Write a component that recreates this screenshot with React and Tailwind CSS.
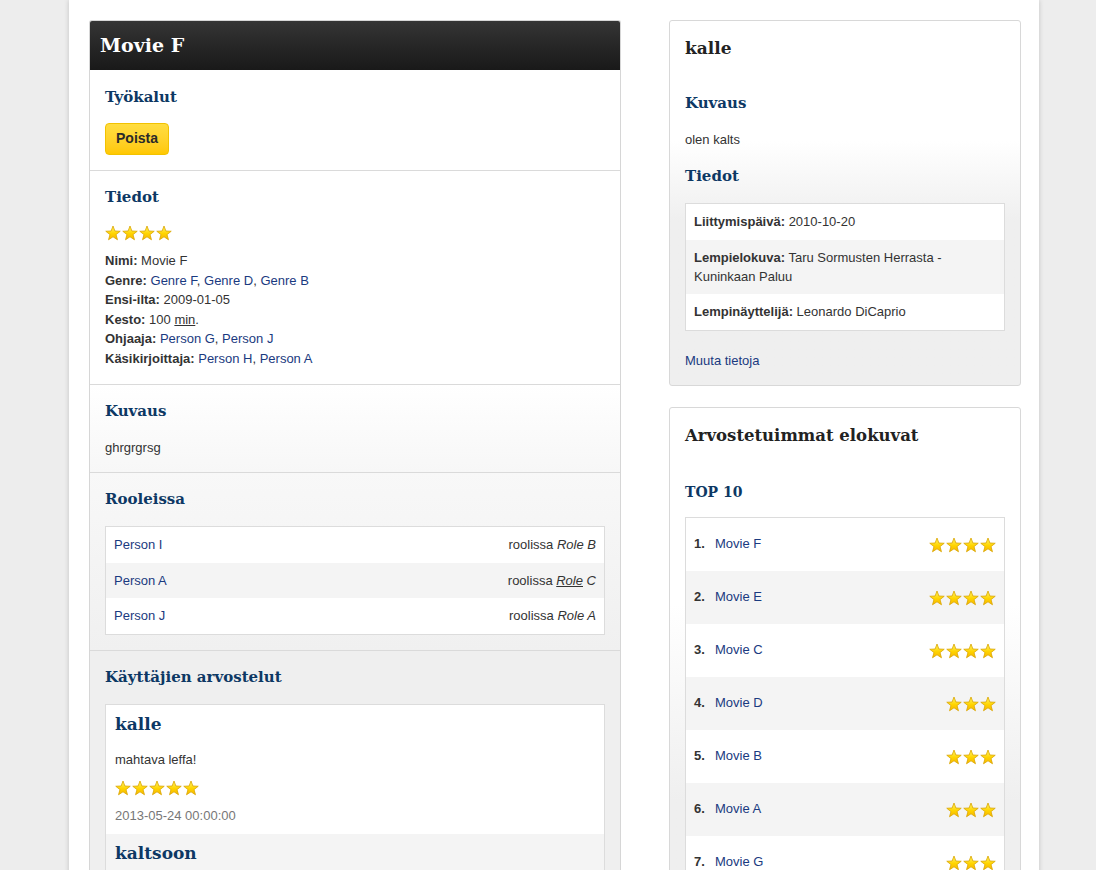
import { useId } from 'react';

const serif = "font-['DejaVu_Serif',Georgia,serif] font-bold";

const roles = [
  { person: 'Person I', role: 'Role B' },
  { person: 'Person A', role: 'Role C', abbr: true },
  { person: 'Person J', role: 'Role A' },
];

const top10 = [
  { title: 'Movie F', stars: 4 },
  { title: 'Movie E', stars: 4 },
  { title: 'Movie C', stars: 4 },
  { title: 'Movie D', stars: 3 },
  { title: 'Movie B', stars: 3 },
  { title: 'Movie A', stars: 3 },
  { title: 'Movie G', stars: 3 },
  { title: 'Movie H', stars: 3 },
  { title: 'Movie I', stars: 2 },
  { title: 'Movie J', stars: 2 },
];

export default function App() {
  return (
    <div className="min-h-[870px] bg-[#ededed] font-['Liberation_Sans',Arial,sans-serif] text-[13px] leading-[19.6px] text-[#333]">
      <div className="ml-[69px] flex w-[970px] gap-[48px] bg-white px-[20px] pt-[20px] pb-[40px] shadow-[0_0_5px_rgba(0,0,0,0.18)]">
        <MoviePanel />
        <div className="flex w-[352px] shrink-0 flex-col gap-[21px]">
          <ProfileCard />
          <TopCard />
        </div>
      </div>
    </div>
  );
}

function MoviePanel() {
  return (
    <div className="w-[532px] shrink-0 overflow-hidden rounded-t-[3px] border-x border-t border-[#d6d6d6]">
      <div className="flex h-[49px] items-center bg-gradient-to-b from-[#353535] to-[#191919] px-[10px]">
        <h1 className={`${serif} text-[19px] text-white`}>Movie F</h1>
      </div>

      <Section className="pt-[16px]">
        <SectionTitle>Työkalut</SectionTitle>
        <button className="mt-[15px] h-[32px] rounded-[4px] border border-[#f2c200] bg-gradient-to-b from-[#ffdd40] to-[#ffc800] px-[10px] text-[14px] font-bold text-[#2a2a2a]">
          Poista
        </button>
      </Section>

      <Section className="pb-[14px]">
        <SectionTitle>Tiedot</SectionTitle>
        <div className="mt-[17px] mb-[10px] flex"><Stars n={4} /></div>
        <p><b>Nimi:</b> Movie F</p>
        <p><b>Genre:</b> <A>Genre F</A>, <A>Genre D</A>, <A>Genre B</A></p>
        <p><b>Ensi-ilta:</b> 2009-01-05</p>
        <p><b>Kesto:</b> 100 <abbr className="underline">min</abbr>.</p>
        <p><b>Ohjaaja:</b> <A>Person G</A>, <A>Person J</A></p>
        <p><b>Käsikirjoittaja:</b> <A>Person H</A>, <A>Person A</A></p>
      </Section>

      <Section className="bg-gradient-to-b from-white to-[#f7f7f7]">
        <SectionTitle>Kuvaus</SectionTitle>
        <p className="mt-[16px]">ghrgrgrsg</p>
      </Section>

      <Section className="bg-gradient-to-b from-[#f8f8f8] to-[#f0f0f0]">
        <SectionTitle>Rooleissa</SectionTitle>
        <div className="mt-[16px] border border-[#dcdcdc]">
          {roles.map((r, i) => (
            <div key={r.person} className={`flex h-[35.5px] items-center justify-between px-[8px] ${i % 2 ? 'bg-[#f4f4f4]' : 'bg-white'}`}>
              <A>{r.person}</A>
              <span>
                roolissa{' '}
                <i>
                  {r.abbr ? <abbr className="underline">Role</abbr> : 'Role'} {r.role.split(' ')[1]}
                </i>
              </span>
            </div>
          ))}
        </div>
      </Section>

      <Section className="border-b-0 bg-[#efefef]">
        <SectionTitle>Käyttäjien arvostelut</SectionTitle>
        <div className="mt-[16px] border border-[#dcdcdc]">
          <Review name="kalle" text="mahtava leffa!" stars={5} date="2013-05-24 00:00:00" />
          <Review name="kaltsoon" text="ihan ok" stars={3} date="2013-05-23 00:00:00" alt />
        </div>
      </Section>
    </div>
  );
}

function Section({ children, className = '' }) {
  return <div className={`border-b border-[#dadada] px-[15px] pt-[15px] pb-[15px] ${className}`}>{children}</div>;
}

function SectionTitle({ children }) {
  return <h2 className={`${serif} text-[15px] leading-[22px] text-[#0d3864]`}>{children}</h2>;
}

function A({ children }) {
  return <a className="text-[#1a3a80]">{children}</a>;
}

function Review({ name, text, stars, date, alt }) {
  return (
    <div className={`px-[9px] pt-[8px] pb-[8px] ${alt ? 'bg-[#f4f4f4]' : 'bg-white'}`}>
      <h3 className={`${serif} text-[17px] leading-[22px] text-[#0d3864]`}>{name}</h3>
      <p className="mt-[15px]">{text}</p>
      <div className="mt-[11px] flex"><Stars n={stars} /></div>
      <p className="mt-[10px] text-[#777]">{date}</p>
    </div>
  );
}

function ProfileCard() {
  return (
    <div className="rounded-[3px] border border-[#d8d8d8] bg-gradient-to-b from-white from-[33%] to-[#efefef] to-[55%] px-[15px] pt-[15px] pb-[15px]">
      <h2 className={`${serif} text-[17px] leading-[24px] text-[#222]`}>kalle</h2>
      <div className="mt-[32px]"><SectionTitle>Kuvaus</SectionTitle></div>
      <p className="mt-[16px]">olen kalts</p>
      <div className="mt-[15px]"><SectionTitle>Tiedot</SectionTitle></div>
      <div className="mt-[16px] border border-[#dcdcdc]">
        <div className="bg-white px-[8px] py-[8px] leading-[20px]"><b>Liittymispäivä:</b> 2010-10-20</div>
        <div className="bg-[#f4f4f4] px-[8px] py-[8px] leading-[19px]"><b>Lempielokuva:</b> Taru Sormusten Herrasta - Kuninkaan Paluu</div>
        <div className="bg-white px-[8px] pt-[8px] pb-[9px] leading-[19px]"><b>Lempinäyttelijä:</b> Leonardo DiCaprio</div>
      </div>
      <p className="mt-[20px]"><A>Muuta tietoja</A></p>
    </div>
  );
}

function TopCard() {
  return (
    <div className="rounded-[3px] border border-[#d8d8d8] bg-gradient-to-b from-white from-[30%] to-[#efefef] to-[60%] px-[15px] pt-[16px] pb-[15px]">
      <h2 className={`${serif} text-[16.5px] leading-[24px] text-[#222]`}>Arvostetuimmat elokuvat</h2>
      <h3 className={`${serif} mt-[34px] text-[14px] leading-[20px] text-[#0d3864]`}>TOP 10</h3>
      <ol className="mt-[15px] border border-[#dcdcdc]">
        {top10.map((m, i) => (
          <li key={m.title} className={`flex h-[53px] items-center justify-between px-[8px] ${i % 2 ? 'bg-[#f4f4f4]' : 'bg-white'}`}>
            <span className="-mt-[2px]">
              <b className="inline-block w-[21px]">{i + 1}.</b>
              <A>{m.title}</A>
            </span>
            <span className="flex pt-[1px]"><Stars n={m.stars} /></span>
          </li>
        ))}
      </ol>
    </div>
  );
}

function Stars({ n }) {
  return (
    <span className="inline-flex gap-[1px]">
      {Array.from({ length: n }).map((_, i) => <Star key={i} />)}
    </span>
  );
}

function Star() {
  const id = useId();
  return (
    <svg width="16" height="16" viewBox="0 0 16 16" className="block">
      <defs>
        <linearGradient id={id} x1="0" y1="0" x2="0" y2="1">
          <stop offset="0" stopColor="#fff66a" />
          <stop offset="0.55" stopColor="#ffd400" />
          <stop offset="1" stopColor="#f7b500" />
        </linearGradient>
      </defs>
      <path
        d="M8 1 L9.88 6.01 L15.23 6.25 L11.04 9.59 L12.47 14.75 L8 11.8 L3.53 14.75 L4.96 9.59 L0.77 6.25 L6.12 6.01 Z"
        fill={`url(#${id})`}
        stroke="#d9a400"
        strokeWidth="0.8"
        strokeLinejoin="round"
      />
    </svg>
  );
}
